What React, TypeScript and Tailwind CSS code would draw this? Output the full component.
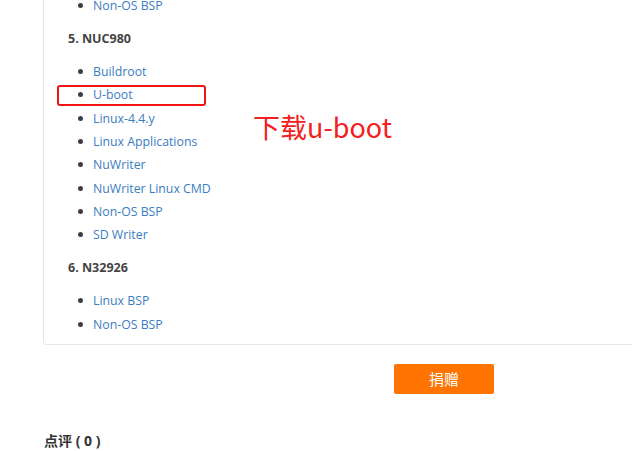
type Section = {
  title?: string
  items: string[]
}

const sections: Section[] = [
  { items: ['Non-OS BSP'] },
  {
    title: '5. NUC980',
    items: [
      'Buildroot',
      'U-boot',
      'Linux-4.4.y',
      'Linux Applications',
      'NuWriter',
      'NuWriter Linux CMD',
      'Non-OS BSP',
      'SD Writer',
    ],
  },
  { title: '6. N32926', items: ['Linux BSP', 'Non-OS BSP'] },
]

function App() {
  return (
    <div
      className="relative h-[451px] w-[632px] overflow-hidden bg-white text-[12px] text-[#333]"
      style={{ fontFamily: '"Open Sans", "Noto Sans CJK SC", sans-serif' }}
    >
      <div className="ml-[43px] w-[620px] rounded-b-[4px] border border-t-0 border-[#e6e6e6] pb-[8px] pl-[24px]">
        <div className="-mt-[6px]">
          {sections.map((section, i) => (
            <div key={i}>
              {section.title && (
                <h4 className="my-[11.33px] text-[12.5px] leading-[20px] font-bold text-[#444]">
                  {section.title}
                </h4>
              )}
              <ul>
                {section.items.map((item) => (
                  <li
                    key={item}
                    className="flex h-[23.33px] items-center leading-[23.33px]"
                  >
                    <span className="ml-[10px] h-[5px] w-[5px] rounded-full bg-[#3a3f4a]" />
                    <a className="ml-[10px] text-[12.3px] text-[#3b7dbf]">{item}</a>
                  </li>
                ))}
              </ul>
            </div>
          ))}
        </div>
      </div>

      <div className="mt-[19px] ml-[394px] flex h-[30px] w-[100px] items-center justify-center rounded-[2px] bg-[#ff7400] text-[15px] text-white">
        捐赠
      </div>

      <h3 className="mt-[36px] ml-[44px] text-[14px] font-bold text-[#333]">
        点评 ( 0 )
      </h3>

      {/* annotation overlay */}
      <div className="absolute top-[85px] left-[57px] h-[21px] w-[149px] rounded-[3px] border-2 border-[#f01414]" />
      <div
        className="absolute top-[109px] left-[253px] text-[27px] leading-[36px] text-[#f42020]"
        style={{ fontFamily: '"Noto Sans CJK SC", sans-serif' }}
      >
        下载u-boot
      </div>
    </div>
  )
}

export default App
